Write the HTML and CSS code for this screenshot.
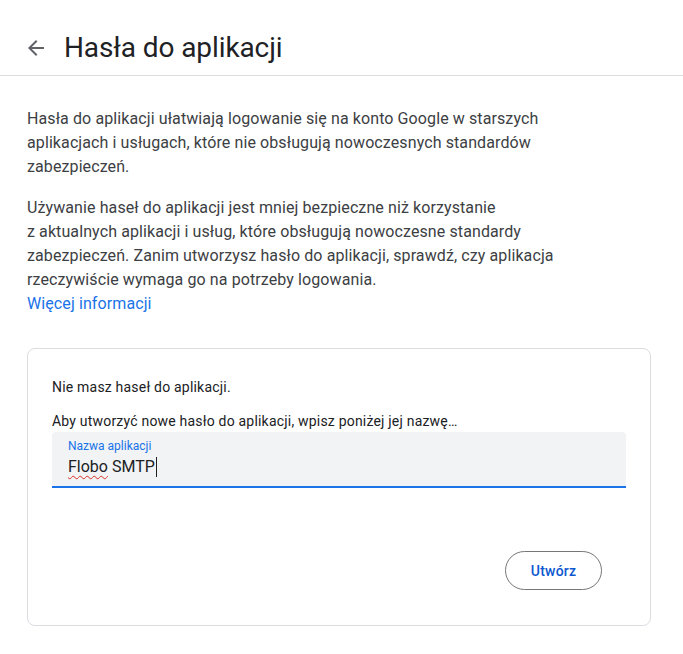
FILE: index.html
```html
<!DOCTYPE html>
<html lang="pl">
<head>
<meta charset="utf-8">
<link rel="stylesheet" href="styles.css">
</head>
<body>
<header class="topbar">
  <svg class="back" viewBox="0 0 24 24" width="24" height="24"><path d="M20 11H7.83l5.59-5.59L12 4l-8 8 8 8 1.41-1.41L7.83 13H20v-2z" fill="#5f6368"/></svg>
  <h1 class="title">Hasła do aplikacji</h1>
</header>
<main class="content">
  <p class="para">Hasła do aplikacji ułatwiają logowanie się na konto Google w starszych aplikacjach i usługach, które nie obsługują nowoczesnych standardów zabezpieczeń.</p>
  <p class="para">Używanie haseł do aplikacji jest mniej bezpieczne niż korzystanie<br>z aktualnych aplikacji i usług, które obsługują nowoczesne standardy zabezpieczeń. Zanim utworzysz hasło do aplikacji, sprawdź, czy aplikacja rzeczywiście wymaga go na potrzeby logowania.<br><a class="link" href="#">Więcej informacji</a></p>
  <section class="card">
    <p class="note">Nie masz haseł do aplikacji.</p>
    <p class="note hint">Aby utworzyć nowe hasło do aplikacji, wpisz poniżej jej nazwę…</p>
    <div class="field">
      <span class="label">Nazwa aplikacji</span>
      <span class="value"><span class="spell">Flobo</span> SMTP<span class="caret"></span></span>
    </div>
    <div class="actions">
      <button class="btn">Utwórz</button>
    </div>
  </section>
</main>
</body>
</html>
```
FILE: styles.css
```css
* { box-sizing: border-box; }
body {
  margin: 0;
  background: #fff;
  font-family: Roboto, "Noto Sans", Arial, sans-serif;
  color: #202124;
}
.topbar {
  display: flex;
  align-items: center;
  height: 76px;
  padding: 20px 0 0 24px;
  border-bottom: 1px solid #dadce0;
}
.back { flex: none; }
.title {
  margin: 0 0 0 16px;
  font-weight: 400;
  font-size: 28px;
  line-height: 36px;
  letter-spacing: -0.1px;
  color: #202124;
}
.content {
  padding: 31px 32px 0 27px;
}
.para {
  margin: 0 0 17px;
  font-size: 16px;
  line-height: 24px;
  letter-spacing: 0.1px;
  color: #3c4043;
  max-width: 545px;
}
.link {
  color: #1a73e8;
  text-decoration: none;
}
.card {
  margin-top: 32px;
  width: 624px;
  height: 278px;
  border: 1px solid #dadce0;
  border-radius: 8px;
  padding: 24px 24px 0 24px;
  display: flex;
  flex-direction: column;
}
.note {
  margin: 0;
  font-size: 14px;
  line-height: 20px;
  letter-spacing: 0.2px;
  color: #202124;
}
.note:first-child { margin-top: 4px; }
.hint { margin-top: 14px; }
.field {
  display: flex;
  flex-direction: column;
  height: 56px;
  margin-top: 1px;
  background: #f1f3f4;
  border-radius: 4px 4px 0 0;
  border-bottom: 2px solid #1a73e8;
  padding: 7px 16px 0;
}
.label {
  font-size: 12px;
  line-height: 14px;
  color: #1a73e8;
}
.value {
  font-size: 16px;
  line-height: 22px;
  margin-top: 3px;
  color: #202124;
  display: flex;
  align-items: center;
}
.spell {
  text-decoration: underline wavy #d93025;
  text-decoration-thickness: 1px;
  text-underline-offset: 3px;
  margin-right: 4px;
}
.caret {
  width: 1px;
  height: 20px;
  background: #202124;
  margin-left: 1px;
}
.actions {
  display: flex;
  justify-content: flex-end;
  padding-right: 24px;
  margin-top: 63px;
}
.btn {
  width: 97px;
  height: 39px;
  border: 1px solid #747775;
  border-radius: 20px;
  background: #fff;
  color: #0b57d0;
  font-family: Roboto, Arial, sans-serif;
  font-weight: 500;
  font-size: 14px;
  letter-spacing: 0.2px;
}
```
